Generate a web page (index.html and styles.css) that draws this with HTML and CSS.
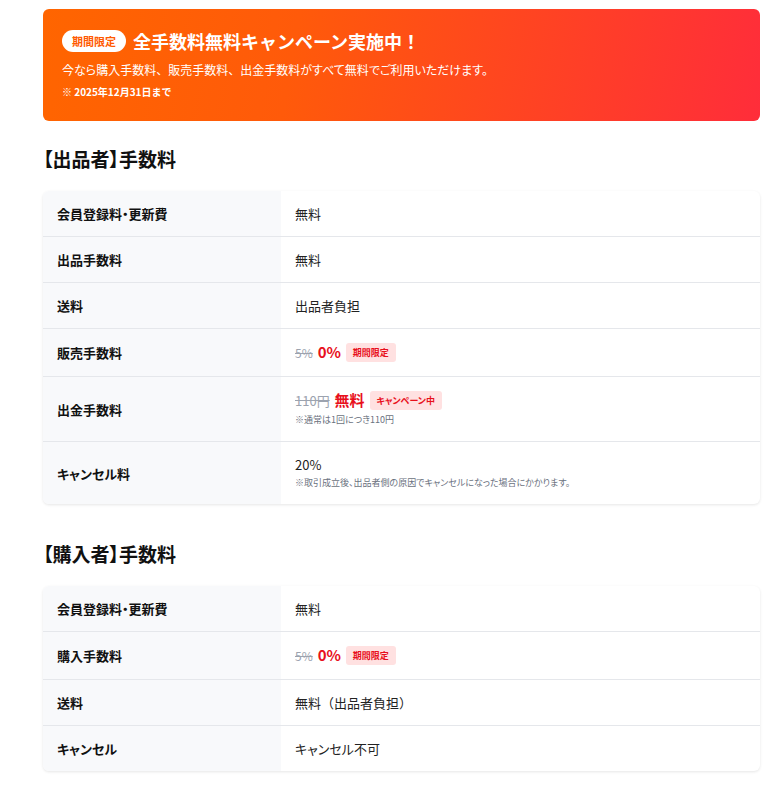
FILE: index.html
```html
<!doctype html>
<html lang="ja">
  <head>
    <meta charset="utf-8">
    <meta name="viewport" content="width=device-width,initial-scale=1">
    <title>手数料</title>
    <link rel="stylesheet" href="styles.css">
  </head>

  <body>
    <main>
      <div class="campaign">
        <h1>
          <span class="pill">期間限定</span>
          全手数料無料キャンペーン実施中！
        </h1>
        <p class="lead">今なら購入手数料<span class="full">、</span>販売手数料<span class="full">、</span>出金手数料がすべて無料でご利用いただけます。</p>
        <p class="until">※ 2025年12月31日まで</p>
      </div>

      <section>
        <h2>【出品者】手数料</h2>

        <table class="fees">
          <tr>
            <th>会員登録料・更新費</th>
            <td>無料</td>
          </tr>
          <tr>
            <th>出品手数料</th>
            <td>無料</td>
          </tr>
          <tr>
            <th>送料</th>
            <td>出品者負担</td>
          </tr>
          <tr>
            <th>販売手数料</th>
            <td>
              <s>5%</s> <strong class="now">0%</strong> <span class="tag">期間限定</span>
            </td>
          </tr>
          <tr>
            <th>出金手数料</th>
            <td>
              <s class="big">110円</s> <strong class="now big">無料</strong> <span class="tag">キャンペーン中</span>
              <small>※通常は1回につき110円</small>
            </td>
          </tr>
          <tr>
            <th>キャンセル料</th>
            <td>
              20%
              <small>※取引成立後、出品者側の原因でキャンセルになった場合にかかります。</small>
            </td>
          </tr>
        </table>
      </section>

      <section>
        <h2>【購入者】手数料</h2>

        <table class="fees">
          <tr>
            <th>会員登録料・更新費</th>
            <td>無料</td>
          </tr>
          <tr>
            <th>購入手数料</th>
            <td>
              <s>5%</s> <strong class="now">0%</strong> <span class="tag">期間限定</span>
            </td>
          </tr>
          <tr>
            <th>送料</th>
            <td>無料<span class="full">（出品者負担）</span></td>
          </tr>
          <tr>
            <th>キャンセル</th>
            <td>キャンセル不可</td>
          </tr>
        </table>
      </section>
    </main>
  </body>
</html>
```

FILE: styles.css
```css
body {
  margin: 0;
  -webkit-font-smoothing: antialiased;
  font-family: "Noto Sans CJK JP", "Noto Sans", sans-serif;
  font-size: 13px;
  color: #222;
  background: #fff;
}

main {
  padding: 9px 18px 24px 43px;
}

.campaign {
  height: 112px;
  box-sizing: border-box;
  padding: 19px 19px 0;
  border-radius: 6px;
  background: linear-gradient(100deg, #ff6500 0%, #ff5a0a 35%, #ff2d3a 100%);
  color: #fff;
}

.campaign h1 {
  display: flex;
  align-items: center;
  gap: 7px;
  margin: 0;
  font-size: 18px;
  line-height: 26px;
  font-weight: 700;
}

.pill {
  display: inline-block;
  padding: 0 10px;
  height: 22px;
  line-height: 22px;
  border-radius: 11px;
  background: #fff;
  color: #ff5a00;
  font-size: 11px;
  font-weight: 700;
}

.lead {
  margin: 7px 0 0;
  font-size: 12px;
  line-height: 17px;
  font-feature-settings: "palt";
}

.until {
  margin: 7px 0 0;
  font-size: 10px;
  font-weight: 700;
  line-height: 14px;
}

section h2 {
  margin: 25px 0 19px;
  font-size: 19px;
  line-height: 26px;
  font-weight: 700;
  color: #111;
  font-feature-settings: "palt";
}

section + section h2 {
  margin-top: 37px;
}

.fees {
  width: 100%;
  border-collapse: collapse;
  border-radius: 6px;
  overflow: hidden;
  box-shadow: 0 1px 3px rgba(0, 0, 0, 0.1);
  font-feature-settings: "palt";
}

.fees th,
.fees td {
  padding: 14px;
  text-align: left;
  line-height: 17px;
  vertical-align: middle;
  border-top: 1px solid #e5e7eb;
}

.fees tr:first-child th,
.fees tr:first-child td {
  border-top: 0;
}

.fees th {
  width: 210px;
  background: #f8f9fb;
  font-weight: 700;
  color: #111;
}

.fees td {
  color: #222;
}

.full {
  font-feature-settings: normal;
}

s {
  color: #9ca3af;
  font-size: 12px;
  margin-right: 2px;
}

.now {
  color: #e8101c;
  font-size: 15px;
  font-weight: 600;
  margin-right: 2px;
}

strong.big {
  font-size: 15px;
  font-weight: 700;
}

s.big {
  font-size: 13px;
}

.tag {
  display: inline-block;
  padding: 0 7px;
  line-height: 19px;
  border-radius: 3px;
  background: #ffe1e1;
  color: #e8101c;
  font-size: 9px;
  font-weight: 700;
  vertical-align: 2px;
}

small {
  display: block;
  margin-top: 3px;
  font-size: 9px;
  line-height: 14px;
  color: #6b7280;
}
```
